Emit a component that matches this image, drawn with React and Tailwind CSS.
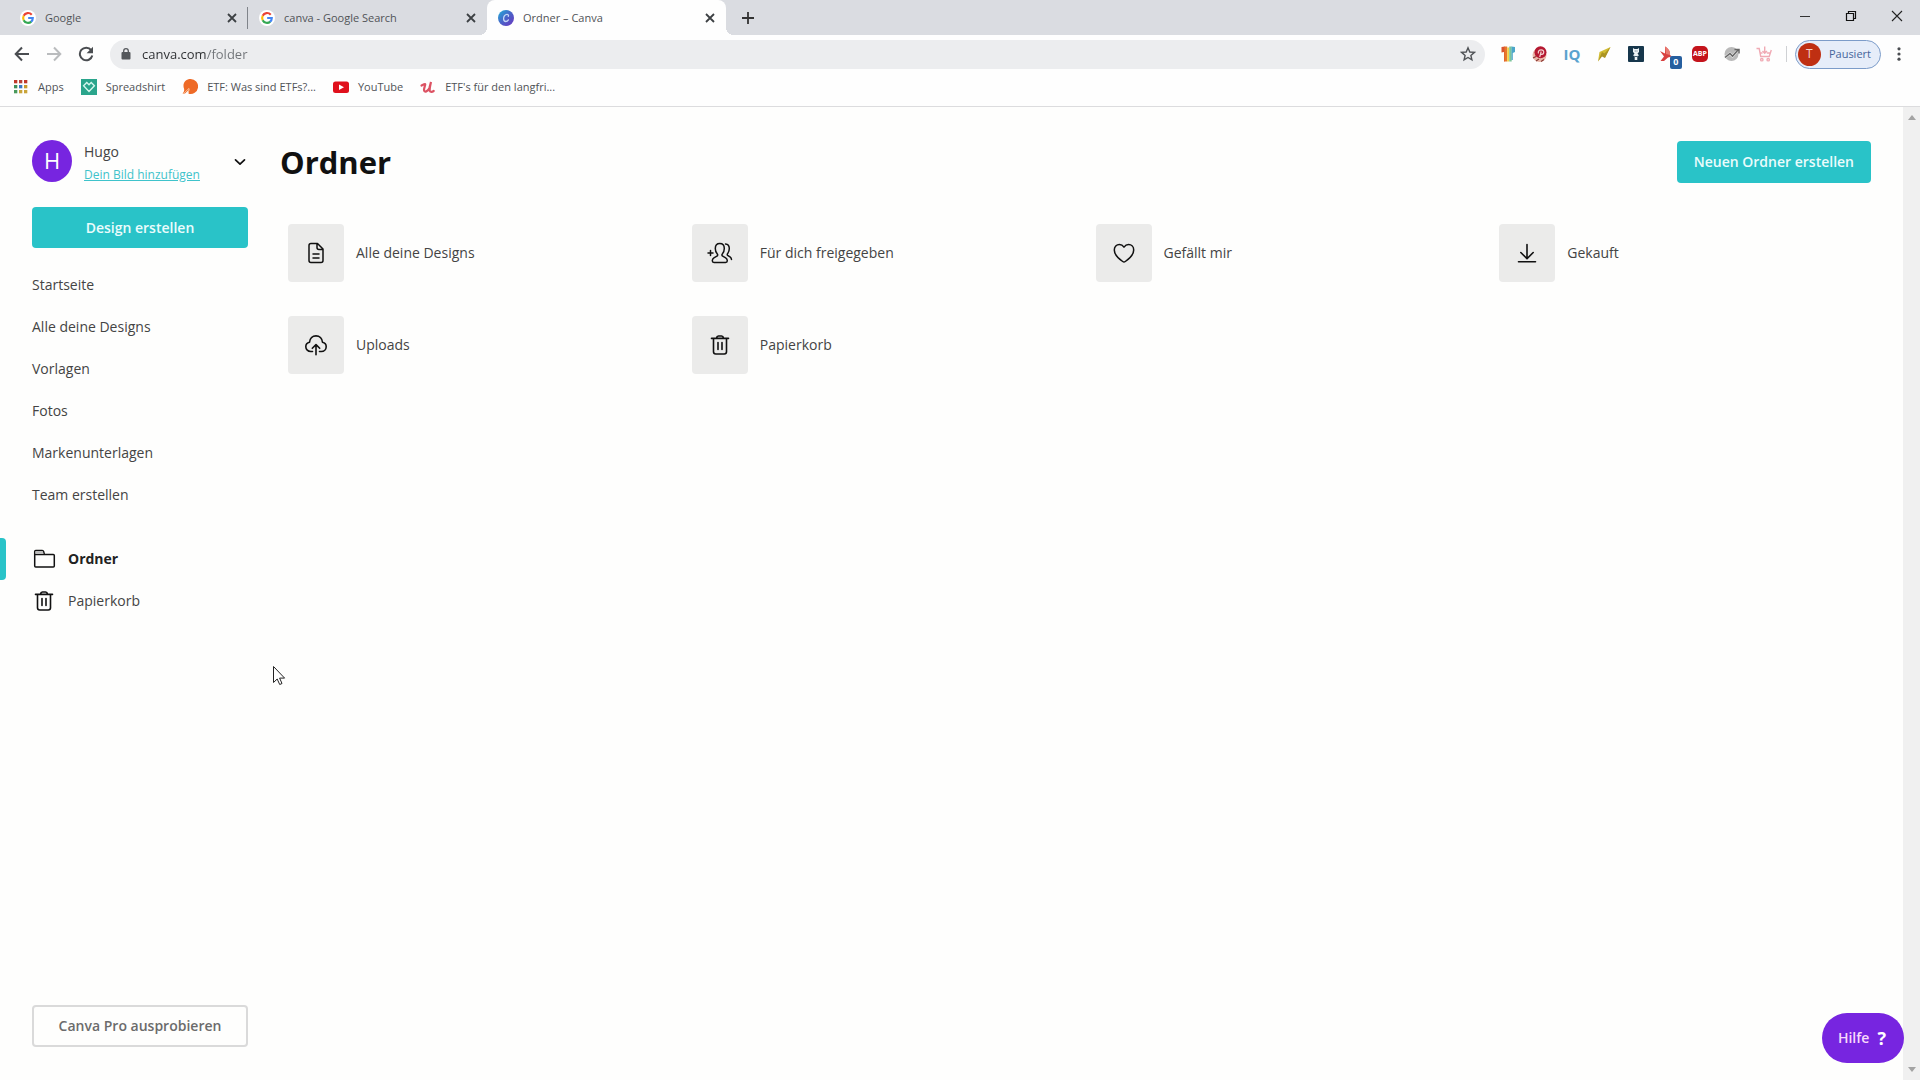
import React, { useState } from 'react';

const GoogleIcon = () => (
  <svg viewBox="0 0 18 18" className="size-4 shrink-0" aria-hidden="true">
    <circle cx="9" cy="9" r="9" fill="#fff" />
    <g fill="none" strokeWidth="2.4">
      <path d="M13.2 5.3A5.5 5.5 0 0 0 4.1 6.5" stroke="#ea4335" />
      <path d="M4.2 6.4a5.5 5.5 0 0 0 0 5.2" stroke="#fbbc05" />
      <path d="M4.1 11.5a5.5 5.5 0 0 0 8.6 1.6" stroke="#34a853" />
      <path d="M12.5 13.2A5.5 5.5 0 0 0 14.4 9H9.2" stroke="#4285f4" />
    </g>
  </svg>
);

const CanvaIcon = () => (
  <svg viewBox="0 0 16 16" className="size-4 shrink-0" aria-hidden="true">
    <defs>
      <linearGradient id="canva" x1="0" y1="0" x2="1" y2="1">
        <stop offset="0" stopColor="#1fb0d8" />
        <stop offset="0.5" stopColor="#4a62c8" />
        <stop offset="1" stopColor="#6b35c0" />
      </linearGradient>
    </defs>
    <circle cx="8" cy="8" r="8" fill="url(#canva)" />
    <path d="M10.3 6.3c.6-1.3-.3-2-1.3-2-2 0-3.400 2.100-3.400 4.400 0 1.900 1 2.800 2.200 2.800 1.200 0 2-.7 2.600-1.600" fill="none" stroke="#c4d8f6" strokeWidth="1.300" strokeLinecap="round" />
  </svg>
);

const CloseIcon = () => (
  <svg viewBox="0 0 12 12" className="size-3" fill="none" stroke="#3c4043" strokeWidth="1.800" aria-hidden="true">
    <path d="M2 2l8 8M10 2l-8 8" />
  </svg>
);

const TrashIcon = () => (
  <svg viewBox="0 0 24 24" className="size-6" fill="none" stroke="#111" strokeWidth="1.600" strokeLinecap="round" strokeLinejoin="round" aria-hidden="true">
    <path d="M3.500 5.400h17M8.400 5.200c.3-1.500 1-2.200 2-2.200h3.200c1 0 1.700.7 2 2.200M5.500 5.600v13.200c0 1.400.8 2.200 2.200 2.200h8.600c1.400 0 2.200-.8 2.200-2.200V5.600M10 9.500v7M14 9.500v7" />
  </svg>
);

const FolderIcon = () => (
  <svg viewBox="0 0 24 24" className="size-6" fill="none" stroke="#111" strokeWidth="1.500" strokeLinejoin="round" aria-hidden="true">
    <path d="M2.700 7.500h18.600c.6 0 1 .4 1 1V19c0 .6-.4 1-1 1H3.700c-.6 0-1-.4-1-1V4.500c0-.6.4-1 1-1h6.600c.8 0 1.100.3 1.300 1l.8 3" />
    <path d="M3.500 4.300h7.400l.6 2.500h-8z" fill="#bbb" stroke="none" />
  </svg>
);

const FileIcon = () => (
  <svg viewBox="0 0 24 24" className="size-6" fill="none" stroke="#111" strokeWidth="1.500" strokeLinecap="round" strokeLinejoin="round" aria-hidden="true">
    <path d="M13.500 2.500H7c-1.300 0-2 .7-2 2v15c0 1.300.7 2 2 2h10c1.300 0 2-.7 2-2V8zM13 2.800v3.700c0 1.300.7 2 2 2h3.700M9 13h6M9 17h6" />
  </svg>
);

const SharedIcon = () => (
  <svg viewBox="0 0 26 24" className="h-6 w-[26px]" fill="none" stroke="#111" strokeWidth="1.500" strokeLinecap="round" strokeLinejoin="round" aria-hidden="true">
    <path d="M12.800 2.500c-2.800 0-4.500 2-4.500 4.900 0 2.300.9 4.300 2 5.500.6.7.5 1.800-.4 2.300l-3 1.600c-1.300.8-1.600 1.600-1.600 3 0 1 .7 1.700 1.700 1.700h11.600c1 0 1.700-.7 1.700-1.700 0-1.400-.3-2.200-1.600-3l-3-1.600c-.9-.5-1-1.600-.4-2.300 1.100-1.200 2-3.200 2-5.500 0-2.900-1.700-4.900-4.500-4.900zM18.500 3c2.400.2 3.800 2 3.800 4.600 0 2.100-.7 3.800-1.600 5-.7.800-.5 1.600.3 2.100l2 1.200c1.200.8 1.500 1.400 1.500 2.600M1 12h5M3.500 9.500v5" />
  </svg>
);

const HeartIcon = () => (
  <svg viewBox="0 0 24 24" className="size-6" fill="none" stroke="#111" strokeWidth="1.500" strokeLinejoin="round" aria-hidden="true">
    <path d="M12 6.200C10.800 4.400 9.200 3.500 7.400 3.500 4.500 3.500 2.300 5.700 2.300 8.900c0 4.600 4.400 8.900 8.400 11.600.9.600 1.700.6 2.600 0 4-2.700 8.400-7 8.400-11.600 0-3.200-2.200-5.400-5.100-5.400-1.800 0-3.400.9-4.600 2.700z" />
  </svg>
);

const DownloadIcon = () => (
  <svg viewBox="0 0 24 24" className="size-6" fill="none" stroke="#111" strokeWidth="1.600" strokeLinecap="round" strokeLinejoin="round" aria-hidden="true">
    <path d="M12 3.500v14M5.800 11.500L12 17.700l6.200-6.200M3.500 20.700h17" />
  </svg>
);

const UploadIcon = () => (
  <svg viewBox="0 0 24 24" className="size-6" fill="none" stroke="#111" strokeWidth="1.600" strokeLinecap="round" strokeLinejoin="round" aria-hidden="true">
    <path d="M8.500 18.500H6.700C4 18.500 1.800 16.500 1.800 13.800c0-2.300 1.500-4 3.700-4.500C5.800 5.500 8.500 2.900 12 2.900s6.200 2.600 6.500 6.400c2.200.5 3.700 2.200 3.700 4.500 0 2.700-2.200 4.700-4.900 4.700h-1.800M12 21.800V12M8.300 15.300L12 11.600l3.700 3.700" />
  </svg>
);

const tabs = [
  { id: 'google', title: 'Google', icon: <GoogleIcon /> },
  { id: 'search', title: 'canva - Google Search', icon: <GoogleIcon /> },
  { id: 'canva', title: 'Ordner – Canva', icon: <CanvaIcon /> },
];

const bookmarks = [
  {
    title: 'Spreadshirt',
    icon: (
      <svg viewBox="0 0 16 16" className="size-4" aria-hidden="true">
        <path fill="#2aa58c" d="M0 0h16v16H0z" />
        <path d="M8 5.700L5.800 3.600 2.600 6.800 8 12.500l5.400-5.700-3.200-3.200z" fill="none" stroke="#d5f7ee" strokeWidth="1.400" />
      </svg>
    ),
  },
  {
    title: 'ETF: Was sind ETFs?...',
    icon: (
      <svg viewBox="0 0 16 16" className="size-4" aria-hidden="true">
        <path d="M8.500 0a7.500 7.500 0 1 1-2 14.700L7.500 10 3 14.500H.5C2 13 2.500 11.500 2 9.500 0 4 4 0 8.500 0z" fill="#ee6a27" />
        <path d="M1.500 14.500L7 9.200l-.8 4.500" fill="none" stroke="#f9b083" strokeWidth="1" />
      </svg>
    ),
  },
  {
    title: 'YouTube',
    icon: (
      <svg viewBox="0 0 16 16" className="size-4" aria-hidden="true">
        <rect y="2.500" width="16" height="11.500" rx="2.500" fill="#e0101c" />
        <path d="M6 5.500l5 2.700-5 2.800z" fill="#fff" />
      </svg>
    ),
  },
  {
    title: "ETF's für den langfri...",
    icon: (
      <svg viewBox="0 0 16 16" className="size-4" fill="none" stroke="#dc5263" strokeWidth="2.200" strokeLinecap="round" aria-hidden="true">
        <path d="M1.500 6.500c1.500-.8 2.700-1.500 3.500-1.500S4 9 4 10.800c0 3 4.200 2 5.500-2.300L11 3c-.7 3-1.500 6-1.300 8.500.2 1.800 2.600 1.500 4 .5" />
      </svg>
    ),
  },
];

const extensions = [
  {
    title: 'Shirt',
    icon: (
      <svg viewBox="0 0 16 16" className="size-4" aria-hidden="true">
        <path d="M1.500 1L5 .5v15H4V6L1.500 6.500z" fill="#d9542f" />
        <path d="M4.500.5h2.700v15H4.500z" fill="#e8762c" />
        <path d="M7.200 1.500h2v14h-2z" fill="#f0d04a" />
        <path d="M9.200.500h2.500v15H9.200z" fill="#7bc49b" />
        <path d="M11.500.5L15 1v5l-2.200 1v7h-1.300z" fill="#4ba6c9" />
      </svg>
    ),
  },
  {
    title: 'Pin',
    icon: (
      <svg viewBox="0 0 16 16" className="size-4" aria-hidden="true">
        <circle cx="7.500" cy="9" r="7" fill="#eab6a8" />
        <path d="M1 12l3-1.500M4 15l3-2M9 15.500l3-2" stroke="#8a3a34" strokeWidth="1.200" />
        <circle cx="8.500" cy="6.300" r="6" fill="#b51931" />
        <path d="M6.500 7.500c-.8-2 .6-3.700 2.700-3.700 3.600 0 3 4.600.6 4.600-.7 0-1.200-.4-1.300-.8M9.200 5.500L7.700 11" fill="none" stroke="#f3d0d0" strokeWidth="1.200" />
      </svg>
    ),
  },
  { title: 'IQ', icon: <span className="text-[15px] leading-4 font-bold text-[#5aa3cf]">IQ</span> },
  {
    title: 'Flash',
    icon: (
      <svg viewBox="0 0 16 16" className="size-4" aria-hidden="true">
        <path d="M14.500 1L3.500 6 2 15.500l4-6.300 3 2.300L14.500 1z" fill="#d2bd33" />
        <path d="M14.500 1L8.500 7.500 6 6 2 15.500l4-5 3 1.500z" fill="#ab9424" />
      </svg>
    ),
  },
  {
    title: 'Merch',
    icon: (
      <svg viewBox="0 0 16 16" className="size-4" aria-hidden="true">
        <rect width="16" height="16" rx="1" fill="#17374c" />
        <path d="M5 2l1.500 1h3L11 2v4L9.500 7.500l1.500 2-1.700.5v4H6.700v-4L5 9.500l1.500-2L5 6z" fill="#eef4f7" />
        <path d="M6.800 5h.8M8.600 5h.8M7 10.500h2" stroke="#17374c" strokeWidth=".8" />
      </svg>
    ),
  },
  {
    title: 'Bird',
    badge: '0',
    icon: (
      <svg viewBox="0 0 16 16" className="size-4" aria-hidden="true">
        <path d="M5 .5c3.500 2 5.500 5 5 8.500L12 10.500 8 11.500 4 15H.5l3.500-4.500L0 5l5 2.500z" fill="#d8403f" />
        <path d="M5 .5c3.500 2 5.500 5 5 8.500L6 8z" fill="#e97a70" />
      </svg>
    ),
  },
  {
    title: 'Adblock Plus',
    icon: (
      <span className="flex size-4 items-center justify-center rounded-[5px] bg-[#c4141c] text-[7px] font-bold text-white">ABP</span>
    ),
  },
  {
    title: 'Stats',
    icon: (
      <svg viewBox="0 0 16 16" className="size-4" aria-hidden="true">
        <circle cx="7.500" cy="8" r="7" fill="#b9b9b9" />
        <path d="M1 11.500l5-4 2.500 2.700L14 4" fill="none" stroke="#e4e4e4" strokeWidth="2.600" />
        <path d="M1 11.500l5-4 2.500 2.700L14 4M10.500 3.500H15V7.500" fill="none" stroke="#666" strokeWidth="1.500" />
      </svg>
    ),
  },
  {
    title: 'Cart',
    icon: (
      <svg viewBox="0 0 16 16" className="size-4" fill="none" stroke="#f0aab4" strokeWidth="1.400" aria-hidden="true">
        <path d="M.5 2.500h2.700l1.500 8h8.500L15.300 4M4.300 7h2.200M10.800 7H14M8.700.5v6.500M6.500 5l2.200 2.300L11 5" />
        <circle cx="5.800" cy="13.700" r="1.200" />
        <circle cx="12.200" cy="13.700" r="1.200" />
      </svg>
    ),
  },
];

const appDots = [
  ['#c0392b', '#b8433a', '#c0392b'],
  ['#3f8f5a', '#3b78c4', '#c79a2c'],
  ['#4a9a5c', '#c9a43a', '#c9a43a'],
];

const navItems = ['Startseite', 'Alle deine Designs', 'Vorlagen', 'Fotos', 'Markenunterlagen', 'Team erstellen'];

const folders = [
  { title: 'Alle deine Designs', icon: <FileIcon /> },
  { title: 'Für dich freigegeben', icon: <SharedIcon /> },
  { title: 'Gefällt mir', icon: <HeartIcon /> },
  { title: 'Gekauft', icon: <DownloadIcon /> },
  { title: 'Uploads', icon: <UploadIcon /> },
  { title: 'Papierkorb', icon: <TrashIcon /> },
];

const TabStrip = () => {
  const [activeTab, setActiveTab] = useState('canva');

  return (
    <div className="flex h-[35px] items-stretch bg-[#dadce1] pl-[9px]">
      {tabs.map((tab, i) => {
        const active = tab.id === activeTab;
        return (
          <div
            key={tab.id}
            className={`relative flex w-[239px] items-center pr-2 pl-[11px] ${active ? 'rounded-t-lg bg-[#fefefe]' : ''}`}
          >
            {active && (
              <>
                <span className="absolute bottom-0 -left-2 size-2 bg-[radial-gradient(circle_at_0_0,transparent_8px,#fefefe_8px)]" />
                <span className="absolute -right-2 bottom-0 size-2 bg-[radial-gradient(circle_at_100%_0,transparent_8px,#fefefe_8px)]" />
              </>
            )}
            <button type="button" onClick={() => setActiveTab(tab.id)} className="flex flex-1 items-center gap-[9px] text-left">
              {tab.icon}
              {tab.title}
            </button>
            <button type="button" aria-label={`${tab.title} schließen`} className="p-0.5">
              <CloseIcon />
            </button>
            {!active && tabs[i + 1]?.id !== activeTab && <span className="absolute right-0 h-[22px] w-px bg-[#80848a]" />}
          </div>
        );
      })}
      <button type="button" aria-label="Neuer Tab" className="ml-[15px]">
        <svg viewBox="0 0 14 14" className="size-[14px]" stroke="#333" strokeWidth="1.800" aria-hidden="true">
          <path d="M7 1v12M1 7h12" />
        </svg>
      </button>
      <div className="ml-auto flex items-center gap-[34px] pr-[17px] pb-1">
        <button type="button" aria-label="Minimieren">
          <svg viewBox="0 0 12 12" className="size-3" stroke="#333" aria-hidden="true">
            <path d="M1 6.500h10" />
          </svg>
        </button>
        <button type="button" aria-label="Verkleinern">
          <svg viewBox="0 0 12 12" className="size-3" fill="none" stroke="#111" strokeWidth="1.200" aria-hidden="true">
            <path d="M1.500 3.500h7v7h-7zM3.500 3.500v-2h7v7h-2" />
          </svg>
        </button>
        <button type="button" aria-label="Schließen">
          <svg viewBox="0 0 12 12" className="size-3" stroke="#222" strokeWidth="1.100" aria-hidden="true">
            <path d="M1 1l10 10M11 1L1 11" />
          </svg>
        </button>
      </div>
    </div>
  );
};

const Toolbar = () => {
  const [url, setUrl] = useState('canva.com/folder');

  return (
    <div className="flex h-[38px] items-center pl-[14px]">
      <div className="flex items-center gap-4">
        <button type="button" aria-label="Zurück">
          <svg viewBox="0 0 16 16" className="size-4" fill="none" stroke="#4a4d51" strokeWidth="2" aria-hidden="true">
            <path d="M15 8H2M8 1.500L1.700 8 8 14.500" />
          </svg>
        </button>
        <button type="button" aria-label="Vorwärts">
          <svg viewBox="0 0 16 16" className="size-4" fill="none" stroke="#babcbe" strokeWidth="2" aria-hidden="true">
            <path d="M1 8h13M8 1.500L14.300 8 8 14.500" />
          </svg>
        </button>
        <button type="button" aria-label="Neu laden">
          <svg viewBox="0 0 16 16" className="size-4" aria-hidden="true">
            <path d="M13.200 4.200A6.300 6.300 0 1 0 14.300 9.500" fill="none" stroke="#4a4d51" strokeWidth="2" />
            <path d="M15 .8v6.400H8.600z" fill="#4a4d51" />
          </svg>
        </button>
      </div>
      <div className="ml-4 flex h-[29px] flex-1 items-center rounded-full bg-[#ecedef] pr-[7px] pl-[10px]">
        <svg viewBox="0 0 12 14" className="h-[14px] w-3 shrink-0" aria-hidden="true">
          <rect x="1.500" y="5" width="9" height="7.500" rx="1" fill="#55585c" />
          <path d="M3.700 5.500V4a2.300 2.300 0 0 1 4.600 0v1.500" fill="none" stroke="#55585c" strokeWidth="1.300" />
        </svg>
        <input
          type="text"
          aria-label="Adresse"
          value={url}
          onChange={(e) => setUrl(e.target.value)}
          className="ml-[10px] min-w-0 flex-1 bg-[linear-gradient(90deg,#2c2e31_65px,#6f7377_65px)] bg-clip-text text-[13px] leading-5 text-transparent caret-black outline-none"
        />
        <button type="button" aria-label="Lesezeichen hinzufügen" className="p-0.5">
          <svg viewBox="0 0 16 16" className="size-4" fill="none" stroke="#505357" strokeWidth="1.400" aria-hidden="true">
            <path d="M8 1.800l1.800 4.200 4.600.4-3.500 3 1 4.500L8 11.500l-3.900 2.400 1-4.500-3.500-3 4.600-.4z" />
          </svg>
        </button>
      </div>
      <div className="ml-[15px] flex items-center gap-4">
        {extensions.map((ext) => (
          <button key={ext.title} type="button" aria-label={ext.title} className="relative flex size-4 items-center justify-center">
            {ext.icon}
            {ext.badge && (
              <span className="absolute top-[10px] left-[10px] flex h-[13px] w-3 items-center justify-center rounded-xs bg-[#265f9f] text-[9px] font-bold text-white">
                {ext.badge}
              </span>
            )}
          </button>
        ))}
      </div>
      <span className="ml-[14px] h-4 w-px bg-[#cfd1d4]" />
      <button type="button" className="ml-2 flex h-[29px] items-center gap-2 rounded-full border border-[#7c9cc9] bg-[#e6edf9] pr-[9px] pl-0.5 text-[#47669c]">
        <span className="flex size-[23px] items-center justify-center rounded-full bg-[#bf2f12] text-xs text-[#f5d3ca]">T</span>
        Pausiert
      </button>
      <button type="button" aria-label="Menü" className="mr-[13px] ml-[10px]">
        <svg viewBox="0 0 16 16" className="size-4" fill="#4a4d51" aria-hidden="true">
          <circle cx="8" cy="2.800" r="1.600" />
          <circle cx="8" cy="8" r="1.600" />
          <circle cx="8" cy="13.200" r="1.600" />
        </svg>
      </button>
    </div>
  );
};

const BookmarkBar = () => (
  <nav aria-label="Lesezeichen" className="flex h-[33px] items-center gap-[17px] pb-[5px] pl-[13px]">
    <a href="#apps" className="flex items-center gap-[9px]">
      <svg viewBox="0 0 16 16" className="size-4" aria-hidden="true">
        {appDots.map((row, y) =>
          row.map((color, x) => <rect key={`${x}-${y}`} x={1 + x * 5} y={1 + y * 5} width="3.300" height="3.300" fill={color} />)
        )}
      </svg>
      Apps
    </a>
    {bookmarks.map((bookmark) => (
      <a key={bookmark.title} href="#bookmark" className="flex items-center gap-[9px]">
        {bookmark.icon}
        {bookmark.title}
      </a>
    ))}
  </nav>
);

const Sidebar = () => (
  <aside className="flex w-[248px] shrink-0 flex-col pt-[33px] pb-[33px] pl-8">
    <div className="flex items-start">
      <span className="flex h-[42px] w-10 items-center justify-center rounded-[50%] bg-[#7725e0] text-[22px] text-white">H</span>
      <div className="ml-3 flex-1 leading-[23px]">
        <div>Hugo</div>
        <a href="#profile" className="block text-xs leading-[24px] text-[#3fc3cb] underline">
          Dein Bild hinzufügen
        </a>
      </div>
      <button type="button" aria-label="Konto wechseln" className="mt-[14px]">
        <svg viewBox="0 0 16 16" className="size-4" fill="none" stroke="#111" strokeWidth="1.700" strokeLinecap="round" strokeLinejoin="round" aria-hidden="true">
          <path d="M3.500 5.800L8 10.200l4.500-4.400" />
        </svg>
      </button>
    </div>
    <button type="button" className="mt-5 h-[41px] rounded-sm bg-[#29c3c8] font-semibold text-[#eafcfc]">
      Design erstellen
    </button>
    <nav className="mt-4 flex flex-col">
      {navItems.map((item) => (
        <a key={item} href="#nav" className="flex h-[42px] items-center">
          {item}
        </a>
      ))}
    </nav>
    <nav className="mt-[22px] -ml-8 flex flex-col">
      <a href="#folder" className="flex h-[42px] items-center font-bold text-[#222]">
        <span className="h-full w-[6px] rounded-r-sm bg-[#29c3c8]" />
        <span className="mr-3 ml-[26px]">
          <FolderIcon />
        </span>
        Ordner
      </a>
      <a href="#trash" className="flex h-[42px] items-center gap-3 pl-8">
        <TrashIcon />
        Papierkorb
      </a>
    </nav>
    <button type="button" className="mt-auto h-[42px] rounded-sm border-2 border-[#dadada] font-semibold text-[#6b6b6b]">
      Canva Pro ausprobieren
    </button>
  </aside>
);

const App = () => (
  <div className="flex min-h-screen flex-col bg-[#fefefd] font-['Open_Sans',sans-serif] text-sm text-[#444]">
    <header className="border-b border-[#dcdcde] bg-[#fefefe] text-[11px] text-[#505357]">
      <TabStrip />
      <Toolbar />
      <BookmarkBar />
    </header>

    <div className="flex flex-1">
      <Sidebar />
      <main className="flex-1 px-8 pt-[34px]">
        <div className="flex h-[42px] items-center justify-between">
          <h1 className="text-[31px] font-bold text-[#111]">Ordner</h1>
          <button type="button" className="h-full rounded-sm bg-[#29c3c8] px-[17px] font-semibold text-[#eafcfc]">
            Neuen Ordner erstellen
          </button>
        </div>
        <div className="mt-[41px] grid grid-cols-4 gap-x-6 gap-y-[34px]">
          {folders.map((folder) => (
            <a key={folder.title} href="#open" className="flex items-center gap-3 px-2">
              <span className="flex h-[58px] w-14 items-center justify-center rounded-sm bg-[#ebebea]">{folder.icon}</span>
              {folder.title}
            </a>
          ))}
        </div>
      </main>
      <div className="flex w-[17px] shrink-0 flex-col items-center justify-between bg-[#f0f0f0] py-2" aria-hidden="true">
        <svg viewBox="0 0 8 5" className="h-[5px] w-2" fill="#a3a3a3">
          <path d="M4 0l4 5H0z" />
        </svg>
        <svg viewBox="0 0 8 5" className="h-[5px] w-2" fill="#a3a3a3">
          <path d="M0 0h8L4 5z" />
        </svg>
      </div>
    </div>

    <button type="button" className="fixed right-4 bottom-[17px] flex h-[50px] items-center gap-2 rounded-full bg-[#7725e0] pr-[18px] pl-4 font-semibold text-[#f7d9fb]">
      Hilfe
      <span className="text-lg font-bold text-white">?</span>
    </button>

    {/* mouse pointer */}
    <svg viewBox="0 0 14 21" className="pointer-events-none fixed top-[665px] left-[272px] h-[21px] w-[14px]" fill="#fff" stroke="#222" aria-hidden="true">
      <path d="M1.500 1.500v16l3.700-3.500 2.500 5.500 2.300-1-2.400-5.400h5z" />
    </svg>
  </div>
);

export default App;
